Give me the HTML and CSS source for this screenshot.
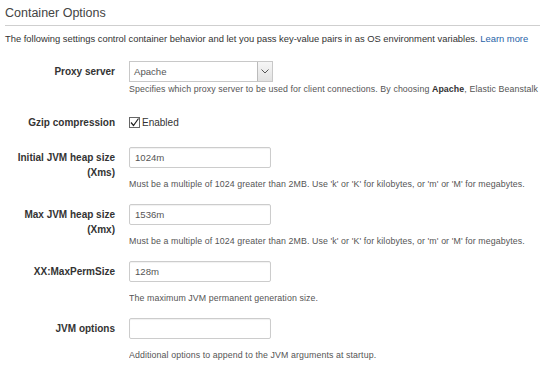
FILE: index.html
```html
<!DOCTYPE html>
<html lang="en">
<head>
  <meta charset="UTF-8">
  <title>Container Options</title>
  <link rel="stylesheet" href="styles.css">
</head>
<body>
  <div class="panel">
    <h2 class="panel-title">Container Options</h2>
    <p class="intro">The following settings control container behavior and let you pass key-value pairs in as OS environment variables. <a href="#">Learn more</a></p>

    <div class="field field-select">
      <label class="field-label">Proxy server</label>
      <div class="field-control">
        <div class="select">
          <span class="select-value">Apache</span>
          <span class="select-btn">
            <svg width="8" height="5" viewBox="0 0 8 5"><path d="M0.5 0.5 L4 4 L7.5 0.5" fill="none" stroke="#555" stroke-width="1"/></svg>
          </span>
        </div>
        <div class="help help-tight">Specifies which proxy server to be used for client connections. By choosing <b>Apache</b>, Elastic Beanstalk</div>
      </div>
    </div>

    <div class="field field-check">
      <label class="field-label">Gzip compression</label>
      <div class="field-control">
        <span class="check">
          <span class="check-box">
            <svg width="11" height="11" viewBox="0 0 11 11"><path d="M2 5.5 L4.5 8.5 L9.5 1.5" fill="none" stroke="#222" stroke-width="1.2"/></svg>
          </span>
          Enabled
        </span>
      </div>
    </div>

    <div class="field">
      <label class="field-label">Initial JVM heap size (Xms)</label>
      <div class="field-control">
        <div class="input">1024m</div>
        <div class="help">Must be a multiple of 1024 greater than 2MB. Use 'k' or 'K' for kilobytes, or 'm' or 'M' for megabytes.</div>
      </div>
    </div>

    <div class="field">
      <label class="field-label">Max JVM heap size (Xmx)</label>
      <div class="field-control">
        <div class="input">1536m</div>
        <div class="help">Must be a multiple of 1024 greater than 2MB. Use 'k' or 'K' for kilobytes, or 'm' or 'M' for megabytes.</div>
      </div>
    </div>

    <div class="field">
      <label class="field-label">XX:MaxPermSize</label>
      <div class="field-control">
        <div class="input">128m</div>
        <div class="help">The maximum JVM permanent generation size.</div>
      </div>
    </div>

    <div class="field">
      <label class="field-label">JVM options</label>
      <div class="field-control">
        <div class="input"></div>
        <div class="help">Additional options to append to the JVM arguments at startup.</div>
      </div>
    </div>
  </div>
</body>
</html>
```

FILE: styles.css
```css
html, body {
  margin: 0;
  padding: 0;
  background: #fff;
}
body {
  font-family: "Liberation Sans", Arial, sans-serif;
  color: #333;
  overflow: hidden;
}

.panel {
  padding: 6px 0 0 5px;
}

.panel-title {
  margin: 0;
  font-size: 12.5px;
  font-weight: normal;
  color: #444;
  line-height: 15px;
  padding-bottom: 4px;
  border-bottom: 1px solid #cfcfcf;
}

.intro {
  margin: 7px 0 0 0;
  font-size: 9.4px;
  line-height: 12px;
  color: #333;
  white-space: nowrap;
}
.intro a {
  color: #1f63a8;
  text-decoration: none;
}

/* form rows */
.field {
  display: grid;
  grid-template-columns: 110px 1fr;
  column-gap: 14px;
  margin-bottom: 14px;
}
.field-label {
  text-align: right;
  font-weight: bold;
  font-size: 10px;
  line-height: 15px;
  color: #333;
  padding-top: 3px;
}
.field-control {
  min-width: 0;
  overflow: hidden;
}

.field-select {
  margin-top: 16px;
  margin-bottom: 20px;
}
.field-check {
  margin-bottom: 17px;
}
.field-check .field-label {
  padding-top: 0;
}

.select {
  width: 144px;
  height: 21px;
  box-sizing: border-box;
  border: 1px solid #c8c8c8;
  display: flex;
  align-items: center;
  background: #fff;
}
.select-value {
  flex: 1;
  font-size: 9.6px;
  color: #555;
  padding-left: 4px;
}
.select-btn {
  width: 15px;
  height: 19px;
  box-sizing: border-box;
  border-left: 1px solid #bbb;
  background: linear-gradient(#f6f6f6, #e2e2e2);
  display: flex;
  align-items: center;
  justify-content: center;
}

.check {
  display: flex;
  align-items: center;
  gap: 2px;
  font-size: 10px;
  line-height: 15px;
  color: #333;
}
.check-box {
  width: 11px;
  height: 11px;
  box-sizing: border-box;
  border: 1px solid #666;
  display: flex;
  background: #fff;
}
.check-box svg {
  margin: -1px;
}

.input {
  width: 142px;
  height: 21px;
  box-sizing: border-box;
  border: 1px solid #ccc;
  border-radius: 2px;
  box-shadow: inset 0 1px 1px rgba(0,0,0,0.06);
  font-size: 9.6px;
  line-height: 19px;
  color: #555;
  padding-left: 5px;
}

.help {
  margin-top: 10px;
  font-size: 8.8px;
  line-height: 12px;
  color: #555;
  white-space: nowrap;
  letter-spacing: 0.1px;
}
.help b {
  color: #333;
}
.help-tight {
  margin-top: 1px;
}
```
